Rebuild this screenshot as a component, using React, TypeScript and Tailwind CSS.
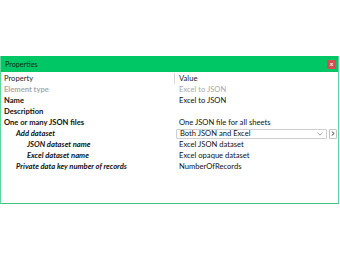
import React from "react";

const rows: { label: string; indent: number; cls: string; value?: string; valueCls?: string; dropdown?: boolean }[] = [
  { label: "Element type", indent: 0, cls: "font-bold text-[#a8a8a8]", value: "Excel to JSON", valueCls: "text-[#a8a8a8]" },
  { label: "Name", indent: 0, cls: "font-bold text-[#111]", value: "Excel to JSON", valueCls: "text-[#111]" },
  { label: "Description", indent: 0, cls: "font-bold text-[#111]", value: "", valueCls: "" },
  { label: "One or many JSON files", indent: 0, cls: "font-bold text-[#111]", value: "One JSON file for all sheets", valueCls: "text-[#111]" },
  { label: "Add dataset", indent: 12, cls: "font-bold italic text-[#111]", dropdown: true },
  { label: "JSON dataset name", indent: 23, cls: "font-bold italic text-[#111]", value: "Excel JSON dataset", valueCls: "text-[#111]" },
  { label: "Excel dataset name", indent: 23, cls: "font-bold italic text-[#111]", value: "Excel opaque dataset", valueCls: "text-[#111]" },
  { label: "Private data key number of records", indent: 12, cls: "font-bold italic text-[#111]", value: "NumberOfRecords", valueCls: "text-[#111]" },
];

export default function App() {
  return (
    <div className="w-[340px] h-[260px] bg-white pt-[56px] text-[7.6px] leading-[11px]" style={{ fontFamily: "Lato, 'Liberation Sans', sans-serif" }}>
      <div className="w-[339px] h-[148px] flex flex-col border-l border-r border-b border-[#5ed79c] border-b-[#3fc383]">
        <div className="h-[16px] bg-[#00c765] flex items-center justify-between pl-[4px] pr-[2px]">
          <span className="text-[#0b2a16] text-[7.2px]">Properties</span>
          <div className="w-[9px] h-[9px] bg-[#d24f52] flex items-center justify-center text-white text-[6px] leading-none font-bold">x</div>
        </div>
        <div className="flex-1 bg-white pt-[1px]">
          <div className="flex h-[11px] items-center">
            <div className="w-[174px] pl-[3px] text-[#222] border-r border-[#d8d8d8] h-full">Property</div>
            <div className="pl-[4px] text-[#222]">Value</div>
          </div>
          {rows.map((r) => (
            <div key={r.label} className="flex h-[11px] items-center">
              <div className={`w-[175px] whitespace-nowrap ${r.cls}`} style={{ paddingLeft: 3 + r.indent }}>{r.label}</div>
              {r.dropdown ? (
                <div className="flex items-center gap-[2px]">
                  <div className="w-[151px] h-[10px] border border-[#cfcfcf] rounded-[1px] flex items-center justify-between pl-[3px] pr-[3px] text-[#111]">
                    <span>Both JSON and Excel</span>
                    <svg width="6" height="4" viewBox="0 0 6 4"><path d="M0.5 0.8 L3 3.2 L5.5 0.8" stroke="#888" strokeWidth="0.8" fill="none" /></svg>
                  </div>
                  <div className="w-[8px] h-[10px] border border-[#c4c4c4] rounded-[1px] flex items-center justify-center">
                    <svg width="4" height="5" viewBox="0 0 4 5"><path d="M0.8 0.6 L3.2 2.5 L0.8 4.4" stroke="#333" strokeWidth="0.9" fill="none" /></svg>
                  </div>
                </div>
              ) : (
                <div className={`pl-[3px] whitespace-nowrap ${r.valueCls}`}>{r.value}</div>
              )}
            </div>
          ))}
        </div>
      </div>
    </div>
  );
}
